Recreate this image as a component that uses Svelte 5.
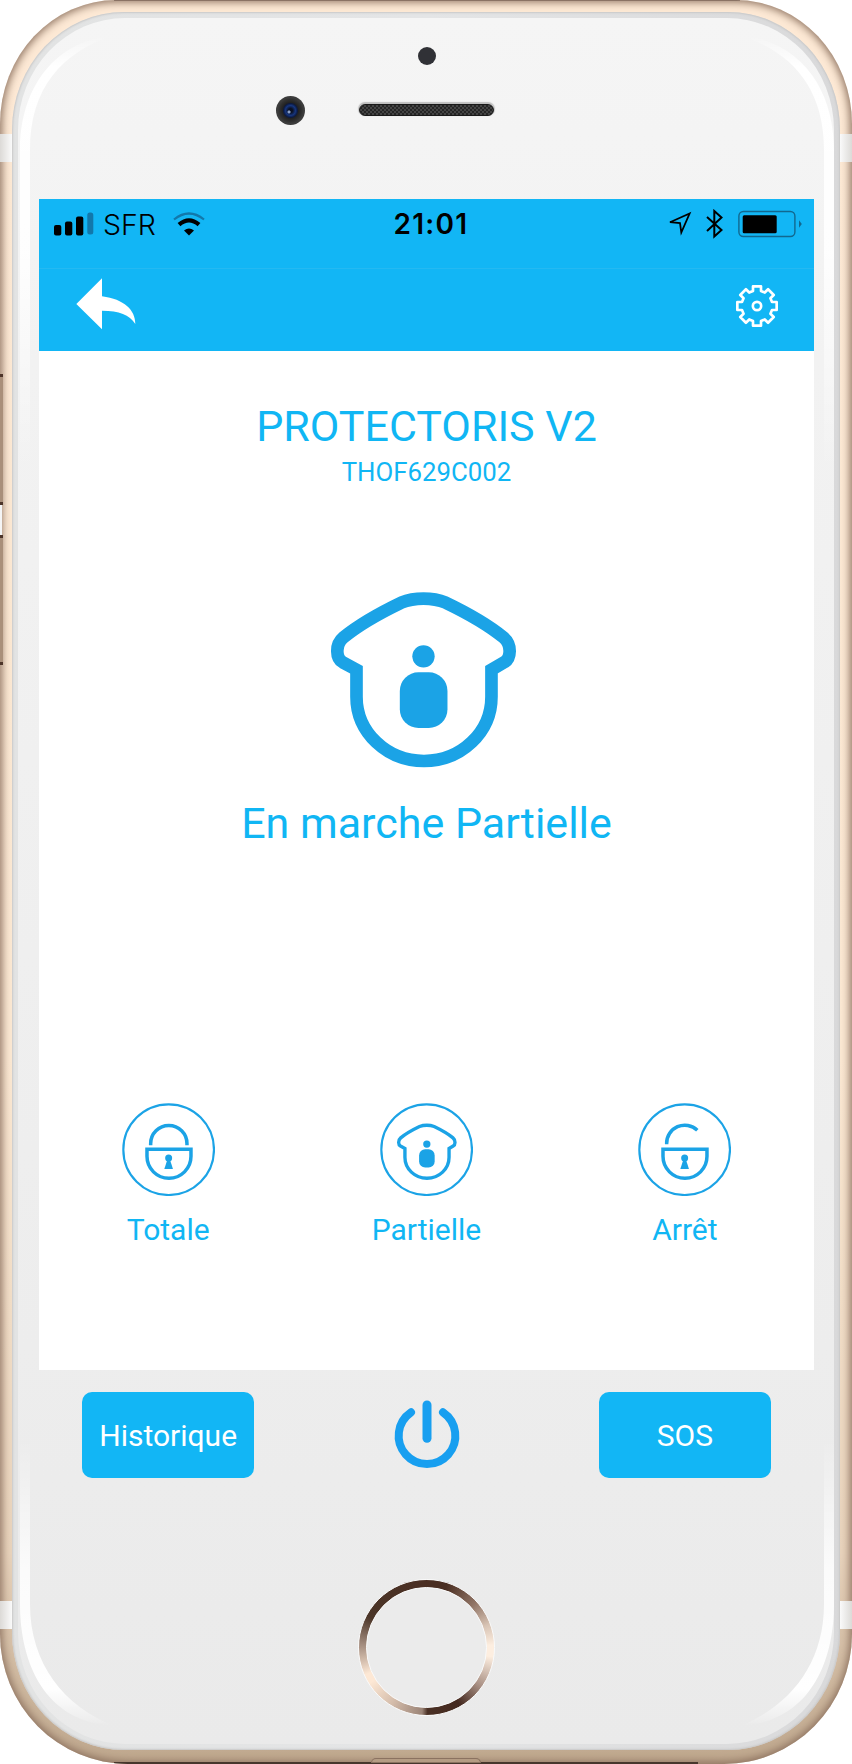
<script>
  const gear = Array.from({ length: 8 }, (_, k) => {
    const a = (k * Math.PI) / 4;
    return [[-12, -45], [-12, -59], [12, -59], [12, -45]]
      .map(([x, y]) => `${(x * Math.cos(a) - y * Math.sin(a)).toFixed(1)},${(x * Math.sin(a) + y * Math.cos(a)).toFixed(1)}`)
      .join(' ');
  }).join(' ');
  const modes = [
    { id: 'total', label: 'Totale' },
    { id: 'partial', label: 'Partielle' },
    { id: 'off', label: 'Arrêt' }
  ];
</script>

{#snippet house(stroke)}
  <path d="M141 350V269L100 247C79 235 76 194 102 172C150 133 225 92 275 68Q305 56 342 56Q379 56 409 68C459 92 534 133 582 172C608 194 605 235 584 247L546 269V350A202.5 193 0 0 1 141 350Z" fill="none" stroke="#1ba3e6" stroke-width={stroke} />
  <circle cx="342" cy="229" r="33.5" fill="#1ba3e6" />
  <rect x="271" y="277" width="143" height="167" rx="56" fill="#1ba3e6" />
{/snippet}

<div class="phone">
  <i class="band l t"></i><i class="band r t"></i><i class="band l b"></i><i class="band r b"></i>
  <i class="key one"></i><i class="gap"></i><i class="key two"></i>
  <i class="edge top-edge"></i><i class="edge bottom-edge"></i><i class="port"></i>
  <div class="rim">
    <div class="face">
      <svg class="gloss" width="852" height="1764" viewBox="0 0 852 1764">
        <defs>
          <linearGradient id="gt" x1="0" x2="0" y1="36" y2="470" gradientUnits="userSpaceOnUse">
            <stop offset="0" stop-color="#fff" stop-opacity="0" /><stop offset=".07" stop-color="#fff" /><stop offset=".5" stop-color="#fff" stop-opacity=".9" /><stop offset="1" stop-color="#fff" stop-opacity="0" />
          </linearGradient>
          <linearGradient id="gb" x1="0" x2="0" y1="1440" y2="1726" gradientUnits="userSpaceOnUse">
            <stop offset="0" stop-color="#fff" stop-opacity="0" /><stop offset=".45" stop-color="#fff" stop-opacity=".8" /><stop offset=".87" stop-color="#fff" /><stop offset="1" stop-color="#fff" stop-opacity="0" />
          </linearGradient>
        </defs>
        <path id="top" d="M20 150C20 95 48 42 114 35C62 52 30 88 30 150V470H20Z" fill="url(#gt)" />
        <path id="bot" d="M20 1440V1604C20 1662 44 1722 114 1726C64 1706 30 1664 30 1604V1440Z" fill="url(#gb)" />
        <use href="#top" transform="translate(854 0) scale(-1 1)" />
        <use href="#bot" transform="translate(854 0) scale(-1 1)" />
      </svg>
      <header class="sensors">
        <span class="camera"></span>
        <span class="center"><span class="dot"></span><span class="speaker"></span></span>
      </header>

      <main>
        <div class="status">
          <svg class="signal" width="40" height="24" viewBox="0 0 40 24">
            <rect x="0" y="13" width="7.3" height="10.5" rx="2" /><rect x="11" y="9.5" width="7.3" height="14" rx="2" /><rect x="22" y="4.5" width="7.3" height="19" rx="2" /><rect x="33.3" y=".5" width="6" height="22" rx="2.5" fill="#1278ab" />
          </svg>
          <span class="carrier">SFR</span>
          <svg class="wifi" width="32" height="24" viewBox="0 0 32 24">
            <path d="M1 7.5Q16-4.5 31 7.5" fill="none" stroke="#1278ab" stroke-width="2.2" />
            <path d="M6 12.7Q16 4 26 12.7" fill="none" stroke="#000" stroke-width="4.2" />
            <path d="M11 18.5Q16 14.5 21 18.5L16 23.5Z" />
          </svg>
          <span class="time">21:01</span>
          <svg class="right" width="138" height="30" viewBox="0 0 138 30">
            <path d="M4 13.2L23.6 4.5L15.3 23.5L14 14Z" fill="none" stroke="#000" stroke-width="1.8" />
            <path d="M41 8L55.5 21L48.3 27.5V2L55.5 8.5L41 22" fill="none" stroke="#000" stroke-width="2" />
            <rect x="72.9" y="2.5" width="56" height="25" rx="4.5" fill="none" stroke="#12688f" stroke-width="1.4" />
            <rect x="76.7" y="6.2" width="34" height="18" rx="1.5" />
            <path d="M133 11.3L135.8 15L133 18.8Z" fill="#12688f" />
          </svg>
        </div>
        <nav>
          <svg width="60" height="52" viewBox="0 0 180 156"><path d="M1 78L78 1V55C145 64 178 96 178 138C160 110 130 98 78 98V154Z" fill="#fff" /></svg>
          <svg width="44" height="44" viewBox="-66 -66 132 132" fill="none" stroke="#fff" stroke-width="8"><polygon points={gear} stroke-linejoin="round" /><circle r="12.5" /></svg>
        </nav>
        <section class="content">
          <h1>PROTECTORIS V2</h1>
          <p class="serial">THOF629C002</p>
          <svg class="big" width="188.3" height="180" viewBox="60 30 565 540">{@render house(38)}</svg>
          <p class="state">En marche Partielle</p>
          <div class="modes">
            {#each modes as m}
              <button>
                <svg width="93.3" height="93.3" viewBox="0 0 280 280" fill="none" stroke="#1ba3e6" stroke-width="10.5">
                  <circle cx="140" cy="140" r="136" stroke-width="6.5" />
                  {#if m.id === 'partial'}
                    <g transform="translate(28.7 48.4) scale(.327)" stroke-width="0">{@render house(31)}</g>
                  {:else}
                    <path d={m.id === 'total' ? 'M86 127V122A54.5 54.5 0 0 1 195 122V127' : 'M86 124V122A54.5 54.5 0 0 1 178 81.5'} />
                    <path d="M75 139H207V160A66 66 0 0 1 75 160Z" />
                    <g fill="#1ba3e6" stroke="none"><circle cx="140" cy="165" r="10.5" /><path d="M136 170H144L153 198H127Z" /></g>
                  {/if}
                </svg>
                <span>{m.label}</span>
              </button>
            {/each}
          </div>
        </section>
        <footer>
          <button class="solid">Historique</button>
          <svg width="68" height="70.7" viewBox="160 118 204 212" fill="none" stroke="#189ff0" stroke-linecap="round">
            <path d="M214 158A85 85 0 1 0 310 158" stroke-width="24" /><path d="M262 136V236" stroke-width="27" />
          </svg>
          <button class="solid">SOS</button>
        </footer>
      </main>
      <div class="home"><div></div></div>
    </div>
  </div>
</div>

<style>
  :global(body) { background: #fff; }
  * { box-sizing: border-box; }
  .phone {
    position: relative; width: 852px; height: 1764px; padding: 12px;
    border-radius: 116px 116px 128px 128px / 124px 124px 130px 130px;
    background: linear-gradient(#fde9d5, #fbe8d3 60%, #e8d3bc 88%, #bea78d);
    box-shadow: inset 0 0 8px 2px #8a6f5d;
    overflow: hidden;
  }
  .band { position: absolute; width: 12px; height: 28px; background: linear-gradient(90deg, #dcdad7, #fafafa); }
  .l { left: 0; } .r { right: 0; transform: scaleX(-1); } .t { top: 134px; } .b { top: 1601px; }
  .key, .gap { position: absolute; left: 0; width: 3px; }
  .key { background: #a98f7a; border: solid #4d3429; border-width: 3px 0; }
  .one { top: 374px; height: 131px; } .two { top: 535px; height: 130px; }
  .gap { top: 505px; height: 30px; width: 2px; background: #f5f5f5; }
  .edge { position: absolute; left: 114px; height: 2px; }
  .top-edge { top: 0; width: 626px; height: 1px; background: #8a7264; }
  .bottom-edge { bottom: 0; width: 584px; background: #46362c; }
  .port { position: absolute; left: 371px; bottom: 1px; width: 110px; height: 5px; border-radius: 5px 5px 0 0; border: 1px solid #8b7260; background: #b59c84; }
  .rim {
    width: 828px; height: 1738px; padding: 6px; border-radius: 112px / 118px;
    background: linear-gradient(90deg, #e2e3e3, #e4e5e6 50%, #d9d9da);
    box-shadow: inset 0 0 2px 1px #c8c8c8;
  }
  .face {
    width: 816px; height: 1726px; padding: 0 20px 0 21px; border-radius: 107px / 112px;
    background: linear-gradient(#f5f5f5, #f2f2f2 20%, #ededed 77%, #eaeaea);
    display: flex; flex-direction: column;
  }
  .gloss { position: absolute; left: 0; top: 0; pointer-events: none; }
  .sensors { height: 181px; display: flex; padding: 29px 0 0 237px; }
  .camera {
    width: 29px; height: 29px; margin-top: 49px; border-radius: 50%;
    background: radial-gradient(circle at 45% 55%, #8ba0c8 0 1px, transparent 2px), radial-gradient(circle at 50% 50%, #0a1022 0 2px, #16357d 5px, #0d1a40 7px, #222 8px, #303030 11px, #3c3c3c 13px);
  }
  .center { width: 135px; margin-left: 54px; display: flex; flex-direction: column; align-items: center; }
  .dot { width: 18px; height: 18px; border-radius: 50%; background: #303136; }
  .speaker {
    width: 135px; height: 12px; margin-top: 39px; border-radius: 6px; border: 1px solid #191919;
    background: repeating-conic-gradient(#252525 0 25%, #444 0 50%) 0 0 / 4px 4px;
    box-shadow: 0 -1px 1px 1px #bfbfbf;
  }
  main { width: 775px; height: 1171px; background: #fff; font-family: Roboto, sans-serif; color: #10b6f4; flex: none; }
  .status {
    height: 70px; background: #12b6f5; color: #000; border-bottom: 1px solid #24b9f2;
    padding: 11px 10px 0 15px; display: grid; grid-template-columns: 49px 70px 32px 1fr 138px; align-items: start;
    font-family: Inter, sans-serif;
  }
  .signal, .wifi { margin-top: 2px; }
  .carrier { font-size: 28.5px; line-height: 29px; font-weight: 300; }
  .time { font-size: 28px; line-height: 28px; font-weight: 600; text-align: center; padding-right: 9px; letter-spacing: 1.3px; }
  .right { justify-self: end; margin-top: -1px; }
  nav { height: 82px; background: #12b6f5; display: flex; justify-content: space-between; padding: 9px 35px 0 37px; }
  nav svg:last-child { margin-top: 6px; }
  .content { height: 1019px; display: flex; flex-direction: column; align-items: center; }
  h1, .state { margin: 0; font-size: 43px; line-height: 52px; font-weight: 400; white-space: nowrap; }
  h1 { margin-top: 49px; }
  .serial { margin: 4px 0 0; font-size: 25.8px; line-height: 32px; }
  .big { margin: 102px 0 0; transform: translateX(-2.5px); flex: none; }
  .state { margin-top: 27px; }
  .modes { width: 775px; display: grid; grid-template-columns: repeat(3, 1fr); margin-top: 254px; }
  .modes button { border: 0; padding: 0; background: none; font: inherit; color: inherit; display: flex; flex-direction: column; align-items: center; }
  .modes span { font-size: 30px; line-height: 36px; margin-top: 16px; }
  footer { display: grid; height: 0; grid-template-columns: repeat(3, 1fr); justify-items: center; align-items: start; padding-top: 22px; }
  footer svg { margin: 7px 0 0 2px; }
  .solid { width: 172px; height: 86px; border: 0; border-radius: 10px; background: #12b6f5; color: #fff; font: 400 30px Roboto, sans-serif; padding: 0; }
  .home {
    width: 137px; height: 137px; margin: 209px auto 0; border-radius: 50%; border: 1.5px solid #fafafa; flex: none;
    background: conic-gradient(#4a2e22, #4a2e22 18deg, #927667 48deg, #d8c4b5 70deg, #fdeee0 88deg, #fdeee0 98deg, #a78e82 126deg, #44291f 150deg, #4a3024 179deg, #9b8477 184deg, #d5bdab 212deg, #fde8d5 238deg, #fde8d5 246deg, #a28b7d 273deg, #4b3528 298deg, #4a2e22);
    padding: 7px;
  }
  .home div { width: 100%; height: 100%; border-radius: 50%; border: 1.5px solid #fafafa; background: #ebebeb; }
</style>
